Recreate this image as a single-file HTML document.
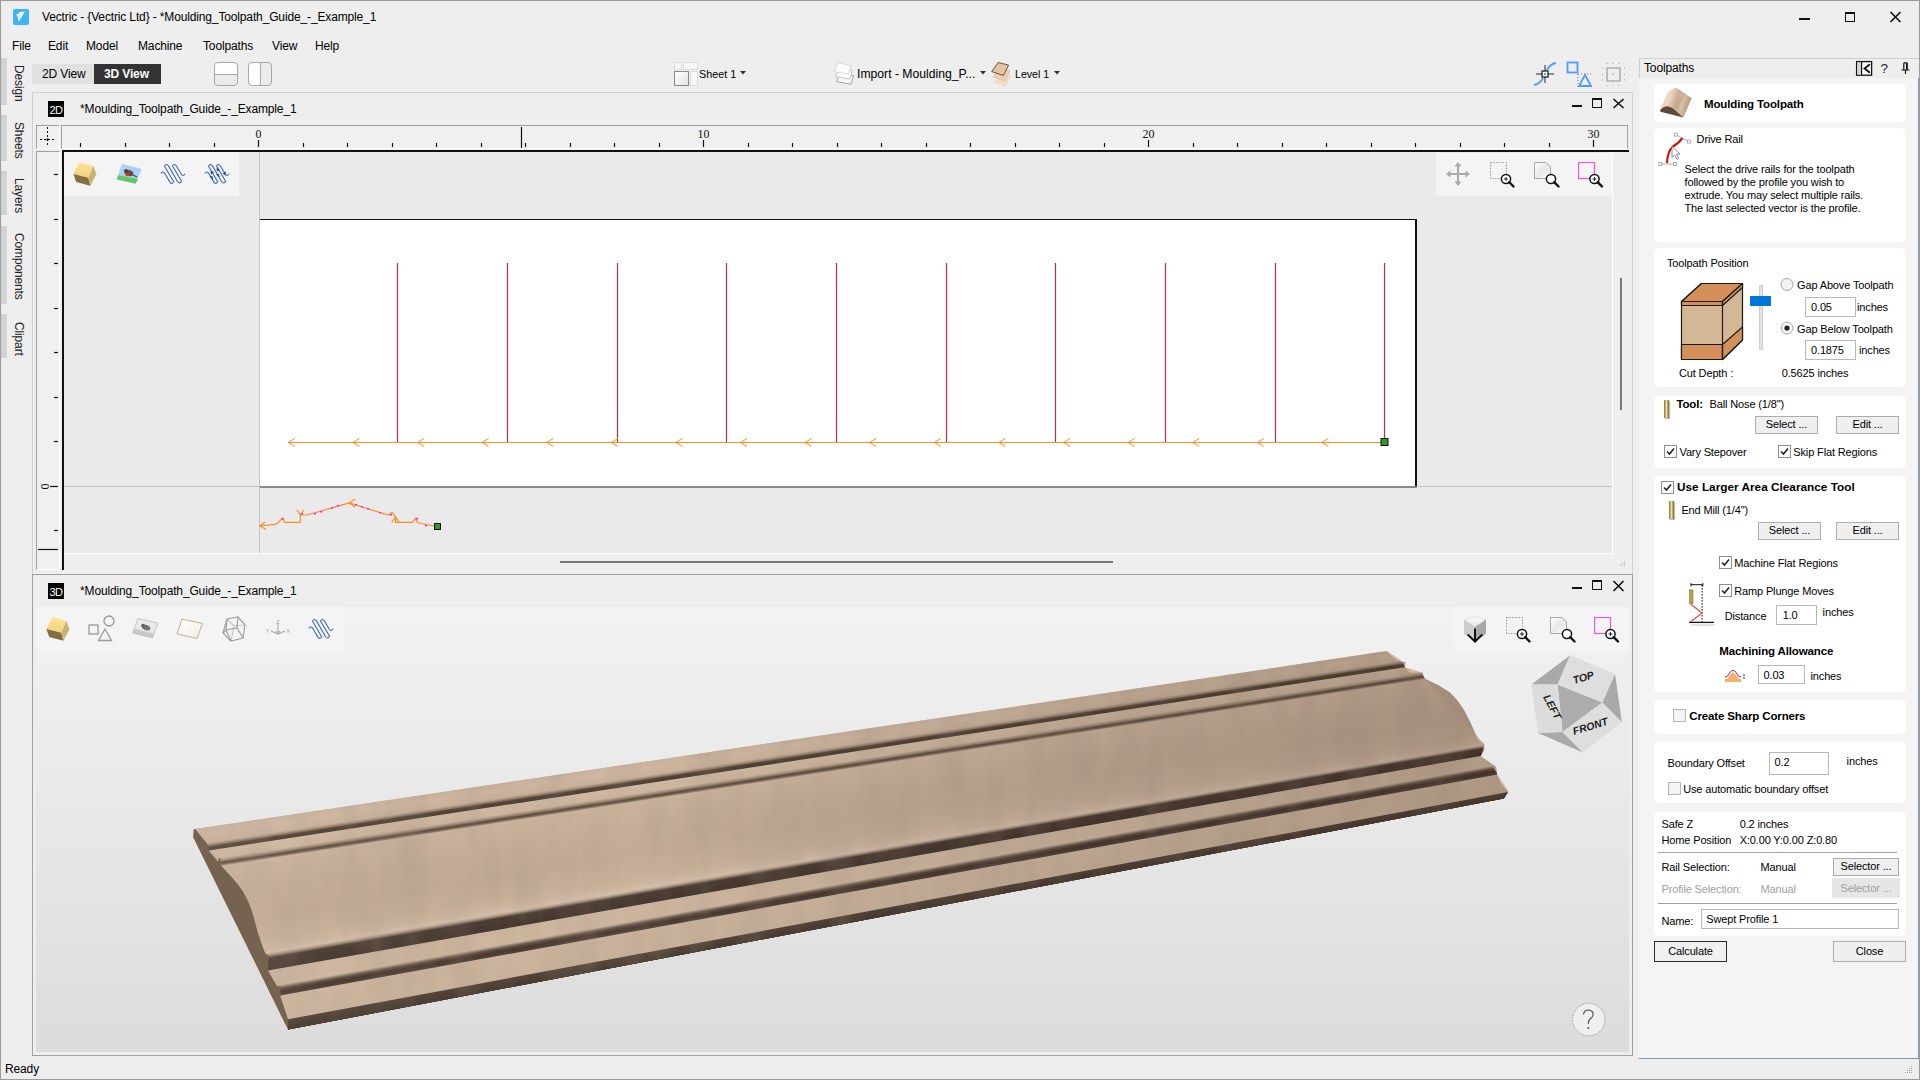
<!DOCTYPE html>
<html><head><meta charset="utf-8">
<style>
*{margin:0;padding:0;box-sizing:border-box}
html,body{width:1920px;height:1080px;overflow:hidden;background:#eeeeee;font-family:"Liberation Sans",sans-serif;font-size:12px;color:#000}
.a{position:absolute}
.t{position:absolute;white-space:pre;line-height:1;letter-spacing:-0.14px}
.b{font-weight:bold}
</style></head><body>
<!-- outer border -->
<div class="a" style="left:0;top:0;width:1920px;height:1080px;border:1px solid #9c9c9c"></div>

<!-- TITLE BAR -->
<div class="a" style="left:13px;top:9px;width:16px;height:16px;background:#3cb4f8;border-radius:2px"></div>
<svg class="a" style="left:13px;top:9px" width="16" height="16"><path d="M3 5.4 L5.6 4.9 L6.3 3.2 L9.5 2.7 L11.9 2.2 L6.5 11.8 L5.4 12.6 L5.6 11 L4.9 9.5 L4.6 7 Z" fill="#fff"/><path d="M6.2 5.5 L7 10" stroke="#8fd4fb" stroke-width="0.6"/></svg>
<div class="t" style="left:42px;top:11px">Vectric - {Vectric Ltd} - *Moulding_Toolpath_Guide_-_Example_1</div>
<div class="a" style="left:1799px;top:18px;width:11px;height:2px;background:#111"></div>
<div class="a" style="left:1845px;top:12px;width:10px;height:10px;border:1px solid #111;border-top-width:2px"></div>
<svg class="a" style="left:1889px;top:11px" width="13" height="12"><path d="M1.5 1 L11.5 11 M11.5 1 L1.5 11" stroke="#111" stroke-width="1.6"/></svg>

<!-- MENU -->
<div class="t" style="left:12px;top:40px">File</div>
<div class="t" style="left:48px;top:40px">Edit</div>
<div class="t" style="left:86px;top:40px">Model</div>
<div class="t" style="left:138px;top:40px">Machine</div>
<div class="t" style="left:203px;top:40px">Toolpaths</div>
<div class="t" style="left:272px;top:40px">View</div>
<div class="t" style="left:315px;top:40px">Help</div>

<!-- LEFT TABS -->
<div class="a" style="left:1px;top:58px;width:6px;height:47px;background:#d2d2d2"></div>
<div class="a" style="left:1px;top:115px;width:6px;height:46px;background:#d2d2d2"></div>
<div class="a" style="left:1px;top:171px;width:6px;height:44px;background:#d2d2d2"></div>
<div class="a" style="left:1px;top:226px;width:6px;height:78px;background:#d2d2d2"></div>
<div class="a" style="left:1px;top:314px;width:6px;height:44px;background:#d2d2d2"></div>
<div class="t" style="left:13px;top:65px;transform-origin:0 0;transform:translate(12px,0) rotate(90deg);color:#222">Design</div>
<div class="t" style="left:13px;top:122px;transform-origin:0 0;transform:translate(12px,0) rotate(90deg);color:#222">Sheets</div>
<div class="t" style="left:13px;top:178px;transform-origin:0 0;transform:translate(12px,0) rotate(90deg);color:#222">Layers</div>
<div class="t" style="left:13px;top:233px;transform-origin:0 0;transform:translate(12px,0) rotate(90deg);color:#222">Components</div>
<div class="t" style="left:13px;top:322px;transform-origin:0 0;transform:translate(12px,0) rotate(90deg);color:#222">Clipart</div>

<!-- VIEW TOOLBAR -->
<div class="a" style="left:32px;top:64px;width:62px;height:20px;background:#e1e1e1"></div>
<div class="t" style="left:42px;top:68px">2D View</div>
<div class="a" style="left:94px;top:64px;width:67px;height:20px;background:#333"></div>
<div class="t b" style="left:104px;top:68px;color:#fff">3D View</div>


<!-- layout icons -->
<div class="a" style="left:214px;top:62px;width:24px;height:24px;border:1px solid #a8a8a8;border-radius:4px;background:linear-gradient(#fff 0 11px,#a8a8a8 11px 12px,#ececec 12px)"></div>
<div class="a" style="left:248px;top:62px;width:24px;height:24px;border:1px solid #a8a8a8;border-radius:4px;background:linear-gradient(90deg,#fff 0 11px,#a8a8a8 11px 12px,#ececec 12px)"></div>

<!-- sheet/level -->
<div class="a" style="left:674px;top:62px;width:8px;height:8px;background:#f8f8f8;border:1px solid #dcdcdc"></div>
<div class="a" style="left:683px;top:62px;width:15px;height:8px;background:#f8f8f8;border:1px solid #dcdcdc"></div>
<div class="a" style="left:674px;top:71px;width:15px;height:15px;background:linear-gradient(135deg,#fff,#e4e4e4);border:1px solid #8a8a8a"></div>
<div class="a" style="left:690px;top:71px;width:8px;height:15px;background:#f8f8f8;border:1px solid #dcdcdc"></div>
<div class="t" style="left:699px;top:68.5px;font-size:10.8px;letter-spacing:0">Sheet 1</div>
<svg class="a" style="left:740px;top:71px" width="6" height="4"><path d="M0 0H6L3 3.5Z" fill="#333"/></svg>
<svg class="a" style="left:833px;top:61px" width="24" height="27"><g stroke-width="0.9" stroke-linejoin="round"><path d="M7.5 11.5 L20.5 14.8 L17.9 23.2 L3.6 20.6Z" fill="#fafafa" stroke="#9a9a9a"/><path d="M6.5 6.5 L19.5 9.8 L16.9 18.2 L2.6 15.6Z" fill="#fbfbfb" stroke="#c0c0c0"/><path d="M5 1.5 L18 4.8 L15.4 13.2 L1.1 10.6Z" fill="#fdfdfd" stroke="#d4d4d4"/></g></svg>
<div class="t" style="left:857px;top:68px;font-size:12.2px;letter-spacing:0">Import - Moulding_P...</div>
<svg class="a" style="left:980px;top:71px" width="6" height="4"><path d="M0 0H6L3 3.5Z" fill="#333"/></svg>
<svg class="a" style="left:991px;top:61px" width="24" height="27"><g stroke-width="0.9" stroke-linejoin="round"><path d="M3.2 21.6 L9.7 12.5 L20.1 15.1 L14.9 25.5Z" fill="#f2dcc6" stroke="#efdcc8"/><path d="M2.2 16.1 L8.7 7 L19.1 9.6 L13.9 20Z" fill="#e9cfb4" stroke="#dcc4aa"/><path d="M0.7 10.6 L7.2 1.5 L17.6 4.1 L12.4 14.5Z" fill="#e4c4a2" stroke="#5a4a3a"/></g></svg>
<div class="t" style="left:1015px;top:68.5px;font-size:10.6px;letter-spacing:0">Level 1</div>
<svg class="a" style="left:1054px;top:71px" width="6" height="4"><path d="M0 0H6L3 3.5Z" fill="#333"/></svg>

<!-- snap icons -->
<svg class="a" style="left:1533px;top:62px" width="24" height="24"><path d="M12 3V21M3 12H21" stroke="#8c8c8c" stroke-width="2"/><path d="M1 23 Q7 22 10 16 M14 8 Q17 2 23 1" stroke="#4e9cff" stroke-width="1.8" fill="none"/><rect x="9" y="9" width="6" height="6" fill="#fff" stroke="#111" stroke-width="1.2"/><rect x="11" y="11" width="2" height="2" fill="#4e9cff"/></svg>
<svg class="a" style="left:1566px;top:61px" width="26" height="26"><rect x="1.5" y="1.5" width="10" height="10" fill="none" stroke="#4e9cff" stroke-width="1.8"/><path d="M12 13H25M12 13V26" stroke="#777" stroke-width="1" stroke-dasharray="1 2"/><path d="M19 14 L25 25 H13Z" fill="none" stroke="#4e9cff" stroke-width="1.8"/></svg>
<svg class="a" style="left:1600px;top:61px" width="26" height="26"><g fill="#c8c8c8"><rect x="7" y="7" width="13" height="13" fill="none" stroke="#b0b0b0" stroke-width="1.6"/><path d="M6 2h2v1H6zM12 2h2v1h-2zM18 2h2v1h-2zM6 24h2v1H6zM12 24h2v1h-2zM18 24h2v1h-2zM2 6h1v2H2zM2 12h1v2H2zM2 18h1v2H2zM24 6h1v2h-1zM24 12h1v2h-1zM24 18h1v2h-1zM12 12h2v2h-2z"/></g></svg>

<!-- ============ 2D WINDOW ============ -->
<div class="a" style="left:32px;top:92px;width:1601px;height:483px;border:1px solid #d0d0d0;border-bottom-color:#a0a0a0;background:#eeeeee"></div>
<div class="a" style="left:48px;top:101px;width:16px;height:16px;background:#000"></div>
<div class="t" style="left:49.5px;top:104.5px;color:#fff;font-size:11px;letter-spacing:-0.6px">2D</div>
<div class="t" style="left:80px;top:103px">*Moulding_Toolpath_Guide_-_Example_1</div>
<div class="a" style="left:1572px;top:105px;width:10px;height:2px;background:#111"></div>
<div class="a" style="left:1592px;top:98px;width:10px;height:10px;border:1px solid #111;border-top-width:2px"></div>
<svg class="a" style="left:1612px;top:98px" width="13" height="11"><path d="M1.5 1 L11.5 10 M11.5 1 L1.5 10" stroke="#111" stroke-width="1.6"/></svg>

<!-- rulers -->
<div class="a" style="left:36px;top:125px;width:24px;height:24px;border:1px solid #a0a0a0;border-right-color:#fff;border-bottom-color:#fff;background:#f0f0f0"></div>
<svg class="a" style="left:36px;top:125px" width="24" height="24"><path d="M11.5 2V22M4 14.5H19" stroke="#111" stroke-width="1" stroke-dasharray="2 2"/><rect x="10.5" y="13.5" width="2" height="2" fill="#111"/></svg>
<div class="a" style="left:61px;top:125px;width:1567px;height:24px;border:1px solid #a0a0a0;border-bottom-color:#fff;background:#f0f0f0"></div>
<div class="a" style="left:36px;top:151px;width:24px;height:419px;border:1px solid #a0a0a0;border-right-color:#fff;border-bottom-color:#fff;background:#f0f0f0"></div>
<svg id="rulers" class="a" style="left:0;top:0" width="1640" height="580"><path d="M80.5 143V147" stroke="#111" stroke-width="1.2"/><path d="M125.5 143V147" stroke="#111" stroke-width="1.2"/><path d="M169.5 143V147" stroke="#111" stroke-width="1.2"/><path d="M214.5 143V147" stroke="#111" stroke-width="1.2"/><path d="M258.5 140V147" stroke="#111" stroke-width="1.2"/><text x="258.5" y="138" text-anchor="middle" font-family="Liberation Serif" font-size="12" fill="#111" transform="translate(0 0)">0</text><path d="M303.5 143V147" stroke="#111" stroke-width="1.2"/><path d="M347.5 143V147" stroke="#111" stroke-width="1.2"/><path d="M392.5 143V147" stroke="#111" stroke-width="1.2"/><path d="M436.5 143V147" stroke="#111" stroke-width="1.2"/><path d="M481.5 143V147" stroke="#111" stroke-width="1.2"/><path d="M525.5 143V147" stroke="#111" stroke-width="1.2"/><path d="M570.5 143V147" stroke="#111" stroke-width="1.2"/><path d="M614.5 143V147" stroke="#111" stroke-width="1.2"/><path d="M659.5 143V147" stroke="#111" stroke-width="1.2"/><path d="M703.5 140V147" stroke="#111" stroke-width="1.2"/><text x="703.5" y="138" text-anchor="middle" font-family="Liberation Serif" font-size="12" fill="#111" transform="translate(0 0)">10</text><path d="M748.5 143V147" stroke="#111" stroke-width="1.2"/><path d="M792.5 143V147" stroke="#111" stroke-width="1.2"/><path d="M837.5 143V147" stroke="#111" stroke-width="1.2"/><path d="M881.5 143V147" stroke="#111" stroke-width="1.2"/><path d="M926.5 143V147" stroke="#111" stroke-width="1.2"/><path d="M970.5 143V147" stroke="#111" stroke-width="1.2"/><path d="M1015.5 143V147" stroke="#111" stroke-width="1.2"/><path d="M1059.5 143V147" stroke="#111" stroke-width="1.2"/><path d="M1104.5 143V147" stroke="#111" stroke-width="1.2"/><path d="M1148.5 140V147" stroke="#111" stroke-width="1.2"/><text x="1148.5" y="138" text-anchor="middle" font-family="Liberation Serif" font-size="12" fill="#111" transform="translate(0 0)">20</text><path d="M1193.5 143V147" stroke="#111" stroke-width="1.2"/><path d="M1237.5 143V147" stroke="#111" stroke-width="1.2"/><path d="M1282.5 143V147" stroke="#111" stroke-width="1.2"/><path d="M1326.5 143V147" stroke="#111" stroke-width="1.2"/><path d="M1371.5 143V147" stroke="#111" stroke-width="1.2"/><path d="M1415.5 143V147" stroke="#111" stroke-width="1.2"/><path d="M1460.5 143V147" stroke="#111" stroke-width="1.2"/><path d="M1504.5 143V147" stroke="#111" stroke-width="1.2"/><path d="M1549.5 143V147" stroke="#111" stroke-width="1.2"/><path d="M1593.5 140V147" stroke="#111" stroke-width="1.2"/><text x="1593.5" y="138" text-anchor="middle" font-family="Liberation Serif" font-size="12" fill="#111" transform="translate(0 0)">30</text><path d="M521.5 127V148" stroke="#111" stroke-width="1.2"/><path d="M54 530.5H58" stroke="#111" stroke-width="1.2"/><path d="M50 486.5H58" stroke="#111" stroke-width="1.2"/><text x="0" y="0" text-anchor="middle" font-family="Liberation Serif" font-size="12" fill="#111" transform="translate(41 486.5) rotate(90)">0</text><path d="M54 441.5H58" stroke="#111" stroke-width="1.2"/><path d="M54 397.5H58" stroke="#111" stroke-width="1.2"/><path d="M54 352.5H58" stroke="#111" stroke-width="1.2"/><path d="M54 308.5H58" stroke="#111" stroke-width="1.2"/><path d="M54 263.5H58" stroke="#111" stroke-width="1.2"/><path d="M54 219.5H58" stroke="#111" stroke-width="1.2"/><path d="M54 174.5H58" stroke="#111" stroke-width="1.2"/><path d="M38 549.5H58" stroke="#111" stroke-width="1.2"/></svg>

<!-- drawing area -->
<div class="a" style="left:62px;top:150px;width:1551px;height:404px;background:#eaeaea;border-left:2px solid #111;border-top:2px solid #111"></div>
<div class="a" style="left:62px;top:553px;width:1551px;height:1px;background:#fff"></div>
<div class="a" style="left:62px;top:151px;width:2px;height:419px;background:#111"></div>
<div class="a" style="left:560px;top:561px;width:553px;height:2px;background:#787878"></div>
<div class="a" style="left:1612px;top:152px;width:1px;height:402px;background:#fff"></div><div class="a" style="left:1620px;top:278px;width:2px;height:132px;background:#787878"></div>
<svg class="a" style="left:1616px;top:560px" width="12" height="10"><g fill="#aaa"><rect x="8" y="1" width="1" height="1"/><rect x="6" y="3" width="1" height="1"/><rect x="8" y="3" width="1" height="1"/><rect x="4" y="5" width="1" height="1"/><rect x="6" y="5" width="1" height="1"/><rect x="8" y="5" width="1" height="1"/></g></svg>

<svg id="draw2d" class="a" style="left:0;top:0" width="1640" height="580"><rect x="62" y="150" width="1567" height="2" fill="#111"/><rect x="64" y="152" width="175" height="44" fill="#f4f4f4"/><rect x="1436" y="153" width="176" height="43" fill="#f4f4f4"/><path d="M259.5 152V553" stroke="#c4c4c4" stroke-width="1"/><path d="M64 486.5H260" stroke="#bdbdbd" stroke-width="1"/><rect x="260" y="219" width="1157" height="268" fill="#fff"/><path d="M260 219.5H1416.5V487" stroke="#111" stroke-width="1" fill="none"/><path d="M1416 219V488" stroke="#111" stroke-width="2"/><path d="M260 487H1417" stroke="#8a8a8a" stroke-width="2"/><path d="M1417 486.5H1612" stroke="#c4c4c4" stroke-width="1"/><path d="M397.5 263V442" stroke="#c0303c" stroke-width="1.2"/><path d="M507.5 263V442" stroke="#c0303c" stroke-width="1.2"/><path d="M617.5 263V442" stroke="#c0303c" stroke-width="1.2"/><path d="M726.5 263V442" stroke="#c0303c" stroke-width="1.2"/><path d="M836.5 263V442" stroke="#c0303c" stroke-width="1.2"/><path d="M946.5 263V442" stroke="#c0303c" stroke-width="1.2"/><path d="M1055.5 263V442" stroke="#c0303c" stroke-width="1.2"/><path d="M1165.5 263V442" stroke="#c0303c" stroke-width="1.2"/><path d="M1275.5 263V442" stroke="#c0303c" stroke-width="1.2"/><path d="M1384.5 263V442" stroke="#c0303c" stroke-width="1.2"/><path d="M288 442.5H1384" stroke="#ff8c1e" stroke-width="1.1"/><path d="M294.8 438.5 L288.3 442.5 L294.8 446.5" stroke="#ff8c1e" stroke-width="1" fill="none"/><path d="M359.4 438.5 L352.9 442.5 L359.4 446.5" stroke="#ff8c1e" stroke-width="1" fill="none"/><path d="M424.0 438.5 L417.5 442.5 L424.0 446.5" stroke="#ff8c1e" stroke-width="1" fill="none"/><path d="M488.6 438.5 L482.1 442.5 L488.6 446.5" stroke="#ff8c1e" stroke-width="1" fill="none"/><path d="M553.2 438.5 L546.7 442.5 L553.2 446.5" stroke="#ff8c1e" stroke-width="1" fill="none"/><path d="M617.8 438.5 L611.3 442.5 L617.8 446.5" stroke="#ff8c1e" stroke-width="1" fill="none"/><path d="M682.4 438.5 L675.9 442.5 L682.4 446.5" stroke="#ff8c1e" stroke-width="1" fill="none"/><path d="M747.0 438.5 L740.5 442.5 L747.0 446.5" stroke="#ff8c1e" stroke-width="1" fill="none"/><path d="M811.6 438.5 L805.1 442.5 L811.6 446.5" stroke="#ff8c1e" stroke-width="1" fill="none"/><path d="M876.2 438.5 L869.7 442.5 L876.2 446.5" stroke="#ff8c1e" stroke-width="1" fill="none"/><path d="M940.8 438.5 L934.3 442.5 L940.8 446.5" stroke="#ff8c1e" stroke-width="1" fill="none"/><path d="M1005.4 438.5 L998.9 442.5 L1005.4 446.5" stroke="#ff8c1e" stroke-width="1" fill="none"/><path d="M1070.0 438.5 L1063.5 442.5 L1070.0 446.5" stroke="#ff8c1e" stroke-width="1" fill="none"/><path d="M1134.6 438.5 L1128.1 442.5 L1134.6 446.5" stroke="#ff8c1e" stroke-width="1" fill="none"/><path d="M1199.2 438.5 L1192.7 442.5 L1199.2 446.5" stroke="#ff8c1e" stroke-width="1" fill="none"/><path d="M1263.8 438.5 L1257.3 442.5 L1263.8 446.5" stroke="#ff8c1e" stroke-width="1" fill="none"/><path d="M1328.4 438.5 L1321.9 442.5 L1328.4 446.5" stroke="#ff8c1e" stroke-width="1" fill="none"/><rect x="1381" y="438.5" width="7" height="7" fill="#2e9a2e" stroke="#111" stroke-width="1"/><path d="M259.7 526.0 L274.8 524.4 L278.4 522.8 L282.1 518.1 L284.7 522.3 L300.3 522.3 L300.3 515.0 L307.0 515.0 L349.3 503.0 L388.3 515.0 L392.0 512.4 L395.6 517.0 L395.6 522.3 L412.3 522.3 L416.0 518.0 L417.5 522.8 L434.2 526.0" stroke="#ff8c1e" stroke-width="1.2" fill="none"/><path d="M265 522 L260 526 L266 529.5" stroke="#ff8c1e" stroke-width="1.2" fill="none"/><path d="M355 499 L349.3 503 L355 507" stroke="#ff8c1e" stroke-width="1.2" fill="none"/><path d="M297 510 L300.3 515 L304 510" stroke="#ff8c1e" stroke-width="1.2" fill="none"/><path d="M391.5 522.5 L395.6 517 L399 522" stroke="#ff8c1e" stroke-width="1.2" fill="none"/><rect x="301" y="513" width="2" height="1.5" fill="#ff22ff"/><rect x="314" y="513" width="2" height="1.5" fill="#ff22ff"/><rect x="320" y="511" width="2" height="1.5" fill="#ff22ff"/><rect x="331" y="507" width="2" height="1.5" fill="#ff22ff"/><rect x="337" y="505" width="2" height="1.5" fill="#ff22ff"/><rect x="355" y="504" width="2" height="1.5" fill="#ff22ff"/><rect x="361" y="506" width="2" height="1.5" fill="#ff22ff"/><rect x="367" y="508" width="2" height="1.5" fill="#ff22ff"/><rect x="379" y="512" width="2" height="1.5" fill="#ff22ff"/><rect x="390" y="514" width="2" height="1.5" fill="#ff22ff"/><rect x="282" y="518" width="2" height="1.5" fill="#ff22ff"/><rect x="416" y="518" width="2" height="1.5" fill="#ff22ff"/><rect x="425" y="525" width="2" height="1.5" fill="#ff22ff"/><rect x="434.5" y="523.5" width="6" height="6" fill="#2e9a2e" stroke="#111" stroke-width="1"/></svg>


<!-- ============ 3D WINDOW ============ -->
<div class="a" style="left:32px;top:574px;width:1601px;height:482px;border:1px solid #a0a0a0;background:#eeeeee"></div>
<div class="a" style="left:36px;top:607px;width:1593px;height:445px;background:linear-gradient(#f2f2f2,#dcdcdc)"></div>
<div class="a" style="left:48px;top:583px;width:16px;height:16px;background:#000"></div>
<div class="t" style="left:49.5px;top:586.5px;color:#fff;font-size:11px;letter-spacing:-0.6px">3D</div>
<div class="t" style="left:80px;top:585px">*Moulding_Toolpath_Guide_-_Example_1</div>
<div class="a" style="left:1572px;top:587px;width:10px;height:2px;background:#111"></div>
<div class="a" style="left:1592px;top:580px;width:10px;height:10px;border:1px solid #111;border-top-width:2px"></div>
<svg class="a" style="left:1612px;top:580px" width="13" height="12"><path d="M1.5 1 L11.5 11 M11.5 1 L1.5 11" stroke="#111" stroke-width="1.6"/></svg>
<svg id="view3d" class="a" style="left:0;top:0" width="1640" height="1080"><defs>
<linearGradient id="wood" x1="0" y1="0" x2="1" y2="0"><stop offset="0" stop-color="#cdb29c"/><stop offset="0.5" stop-color="#c6ab95"/><stop offset="1" stop-color="#b39b85"/></linearGradient>
<linearGradient id="cove" x1="0" y1="0" x2="0.15" y2="1"><stop offset="0" stop-color="#b8a08a"/><stop offset="0.35" stop-color="#c8ae98"/><stop offset="0.7" stop-color="#cbb19b"/><stop offset="1" stop-color="#bba18b"/></linearGradient>
<linearGradient id="dark" x1="0" y1="0" x2="1" y2="0"><stop offset="0" stop-color="#4a3c32"/><stop offset="1" stop-color="#4e4036"/></linearGradient>
</defs><rect x="36" y="607" width="308" height="44" fill="#f4f4f4"/><rect x="1453" y="607" width="176" height="44" fill="#f4f4f4"/><defs><clipPath id="silclip"><polygon points="193.8,829.2 1386.7,651.1 1396.7,660.4 1405.6,661.9 1404.8,667.0 1410.0,672.6 1423.0,672.6 1423.7,677.4 1424.8,678.5 1438.9,685.6 1450.0,692.6 1457.4,700.4 1464.0,710.0 1470.4,722.6 1477.8,739.3 1484.3,744.8 1484.3,750.4 1480.6,755.9 1496.3,767.0 1497.2,774.4 1501.0,783.7 1508.3,792.0 1503.7,798.5 288.0,1029.5 193.2,837.3"/></clipPath><filter id="grain" x="0" y="0" width="1" height="1"><feTurbulence type="fractalNoise" baseFrequency="0.035 0.01" numOctaves="4" seed="11"/><feColorMatrix type="matrix" values="0 0 0 0 0.35  0 0 0 0 0.28  0 0 0 0 0.22  0 0 0 -1.6 0.95"/></filter></defs><polygon points="193.8,829.2 1386.7,651.1 1396.7,660.4 1405.6,661.9 1404.8,667.0 1410.0,672.6 1423.0,672.6 1423.7,677.4 1424.8,678.5 1438.9,685.6 1450.0,692.6 1457.4,700.4 1464.0,710.0 1470.4,722.6 1477.8,739.3 1484.3,744.8 1484.3,750.4 1480.6,755.9 1496.3,767.0 1497.2,774.4 1501.0,783.7 1508.3,792.0 1503.7,798.5 288.0,1029.5 193.2,837.3" fill="#caB19b"/><polygon points="195.0,829.0 1386.7,651.1 1401.0,661.0 206.5,843.0" fill="#ccb49e"/><polygon points="196.2,830.4 1388.1,652.1 1401.0,661.0 206.5,843.0" fill="#cdb59f"/><polygon points="197.3,831.8 1389.6,653.1 1401.0,661.0 206.5,843.0" fill="#ceb6a0"/><polygon points="198.4,833.2 1391.0,654.1 1401.0,661.0 206.5,843.0" fill="#cfb7a1"/><polygon points="199.6,834.6 1392.4,655.1 1401.0,661.0 206.5,843.0" fill="#d0b8a2"/><polygon points="200.8,836.0 1393.8,656.0 1401.0,661.0 206.5,843.0" fill="#cfb7a1"/><polygon points="201.9,837.4 1395.3,657.0 1401.0,661.0 206.5,843.0" fill="#ceb6a0"/><polygon points="203.1,838.8 1396.7,658.0 1401.0,661.0 206.5,843.0" fill="#cdb59f"/><polygon points="204.2,840.2 1398.1,659.0 1401.0,661.0 206.5,843.0" fill="#ccb49e"/><polygon points="205.3,841.6 1399.6,660.0 1401.0,661.0 206.5,843.0" fill="#cbb39d"/><polygon points="206.5,843.0 1401.0,661.0 1404.8,667.2 209.0,850.5" fill="#c2aa94"/><polygon points="206.7,843.5 1401.2,661.4 1404.8,667.2 209.0,850.5" fill="#b9a28d"/><polygon points="206.8,843.9 1401.5,661.7 1404.8,667.2 209.0,850.5" fill="#b19a85"/><polygon points="206.9,844.4 1401.7,662.1 1404.8,667.2 209.0,850.5" fill="#a9927d"/><polygon points="207.1,844.8 1401.9,662.5 1404.8,667.2 209.0,850.5" fill="#a08a76"/><polygon points="207.2,845.2 1402.1,662.9 1404.8,667.2 209.0,850.5" fill="#95806c"/><polygon points="207.4,845.6 1402.3,663.2 1404.8,667.2 209.0,850.5" fill="#867361"/><polygon points="207.5,846.0 1402.5,663.5 1404.8,667.2 209.0,850.5" fill="#786656"/><polygon points="207.6,846.4 1402.7,663.8 1404.8,667.2 209.0,850.5" fill="#6a594b"/><polygon points="207.8,846.8 1402.9,664.1 1404.8,667.2 209.0,850.5" fill="#5b4c40"/><polygon points="207.9,847.1 1403.1,664.4 1404.8,667.2 209.0,850.5" fill="#53453a"/><polygon points="208.1,847.8 1403.4,665.0 1404.8,667.2 209.0,850.5" fill="#524439"/><polygon points="208.3,848.5 1403.8,665.5 1404.8,667.2 209.0,850.5" fill="#514338"/><polygon points="208.6,849.1 1404.1,666.1 1404.8,667.2 209.0,850.5" fill="#504237"/><polygon points="208.8,849.8 1404.5,666.6 1404.8,667.2 209.0,850.5" fill="#4f4136"/><polygon points="209.0,850.5 1404.8,667.2 1421.0,672.8 218.3,858.5" fill="#d1b9a2"/><polygon points="210.9,852.1 1408.0,668.3 1421.0,672.8 218.3,858.5" fill="#d0b8a1"/><polygon points="212.7,853.7 1411.3,669.4 1421.0,672.8 218.3,858.5" fill="#d0b8a0"/><polygon points="214.6,855.3 1414.5,670.6 1421.0,672.8 218.3,858.5" fill="#cfb7a0"/><polygon points="216.4,856.9 1417.8,671.7 1421.0,672.8 218.3,858.5" fill="#ceb69f"/><polygon points="218.3,858.5 1421.0,672.8 1424.8,679.0 220.5,866.0" fill="#c4ac96"/><polygon points="218.4,859.0 1421.2,673.2 1424.8,679.0 220.5,866.0" fill="#bca58f"/><polygon points="218.6,859.4 1421.5,673.5 1424.8,679.0 220.5,866.0" fill="#b49d88"/><polygon points="218.7,859.9 1421.7,673.9 1424.8,679.0 220.5,866.0" fill="#ac9581"/><polygon points="218.8,860.3 1421.9,674.3 1424.8,679.0 220.5,866.0" fill="#a48e7a"/><polygon points="219.0,860.8 1422.1,674.7 1424.8,679.0 220.5,866.0" fill="#998470"/><polygon points="219.1,861.2 1422.4,675.0 1424.8,679.0 220.5,866.0" fill="#8b7765"/><polygon points="219.2,861.6 1422.6,675.4 1424.8,679.0 220.5,866.0" fill="#7d6a5a"/><polygon points="219.4,862.1 1422.8,675.8 1424.8,679.0 220.5,866.0" fill="#6f5d4f"/><polygon points="219.5,862.5 1423.1,676.1 1424.8,679.0 220.5,866.0" fill="#615044"/><polygon points="219.6,863.0 1423.3,676.5 1424.8,679.0 220.5,866.0" fill="#5e4e41"/><polygon points="219.7,863.4 1423.5,676.8 1424.8,679.0 220.5,866.0" fill="#675548"/><polygon points="219.8,863.8 1423.7,677.1 1424.8,679.0 220.5,866.0" fill="#705d4e"/><polygon points="219.9,864.1 1423.8,677.5 1424.8,679.0 220.5,866.0" fill="#786554"/><polygon points="220.1,864.5 1424.0,677.8 1424.8,679.0 220.5,866.0" fill="#816c5b"/><polygon points="220.2,864.9 1424.2,678.1 1424.8,679.0 220.5,866.0" fill="#8a7563"/><polygon points="220.2,865.1 1424.3,678.3 1424.8,679.0 220.5,866.0" fill="#947f6c"/><polygon points="220.3,865.3 1424.5,678.4 1424.8,679.0 220.5,866.0" fill="#9e8976"/><polygon points="220.4,865.5 1424.6,678.6 1424.8,679.0 220.5,866.0" fill="#a99380"/><polygon points="220.4,865.8 1424.7,678.8 1424.8,679.0 220.5,866.0" fill="#b39d89"/><polygon points="265.4,953.2 263.5,949.0 261.0,942.0 258.0,933.0 255.5,924.0 253.0,915.0 250.5,907.0 247.0,899.0 243.0,891.5 238.0,884.5 232.0,877.5 226.0,871.0 220.5,866.0 1424.8,679.0 1438.9,685.6 1450.0,692.6 1457.4,700.4 1464.0,710.0 1470.4,722.6 1477.8,739.3 1484.3,744.8" fill="#c0a892"/><polygon points="220.5,866.0 1424.8,679.0 1484.3,744.8 265.4,953.2" fill="#ccb49e"/><polygon points="221.6,868.1 1426.2,680.6 1484.3,744.8 265.4,953.2" fill="#cbb39d"/><polygon points="222.7,870.2 1427.7,682.2 1484.3,744.8 265.4,953.2" fill="#cab29c"/><polygon points="223.7,872.3 1429.1,683.7 1484.3,744.8 265.4,953.2" fill="#cab29c"/><polygon points="224.8,874.4 1430.5,685.3 1484.3,744.8 265.4,953.2" fill="#c9b19b"/><polygon points="225.9,876.5 1431.9,686.9 1484.3,744.8 265.4,953.2" fill="#c9b19b"/><polygon points="228.0,880.5 1434.7,689.9 1484.3,744.8 265.4,953.2" fill="#c8b09a"/><polygon points="230.0,884.5 1437.4,692.9 1484.3,744.8 265.4,953.2" fill="#c7af99"/><polygon points="232.1,888.5 1440.2,696.0 1484.3,744.8 265.4,953.2" fill="#c6ae98"/><polygon points="234.1,892.5 1442.9,699.0 1484.3,744.8 265.4,953.2" fill="#c5ad97"/><polygon points="236.2,896.5 1445.6,702.0 1484.3,744.8 265.4,953.2" fill="#c5ad97"/><polygon points="238.6,901.2 1448.8,705.6 1484.3,744.8 265.4,953.2" fill="#c4ac96"/><polygon points="241.1,905.9 1452.1,709.1 1484.3,744.8 265.4,953.2" fill="#c4ac96"/><polygon points="243.5,910.6 1455.3,712.7 1484.3,744.8 265.4,953.2" fill="#c4ac96"/><polygon points="245.9,915.4 1458.5,716.2 1484.3,744.8 265.4,953.2" fill="#c3ab95"/><polygon points="248.3,920.1 1461.7,719.8 1484.3,744.8 265.4,953.2" fill="#c4ac96"/><polygon points="250.4,924.1 1464.4,722.8 1484.3,744.8 265.4,953.2" fill="#c5ad97"/><polygon points="252.5,928.1 1467.2,725.8 1484.3,744.8 265.4,953.2" fill="#c6ae98"/><polygon points="254.5,932.1 1469.9,728.9 1484.3,744.8 265.4,953.2" fill="#c7af99"/><polygon points="256.6,936.1 1472.6,731.9 1484.3,744.8 265.4,953.2" fill="#c8b09a"/><polygon points="258.7,940.1 1475.4,734.9 1484.3,744.8 265.4,953.2" fill="#cab29c"/><polygon points="259.6,941.9 1476.6,736.2 1484.3,744.8 265.4,953.2" fill="#cbb39d"/><polygon points="260.5,943.6 1477.8,737.6 1484.3,744.8 265.4,953.2" fill="#ccb49e"/><polygon points="261.4,945.4 1478.9,738.9 1484.3,744.8 265.4,953.2" fill="#ceb6a0"/><polygon points="262.3,947.1 1480.1,740.2 1484.3,744.8 265.4,953.2" fill="#cfb7a1"/><polygon points="263.2,948.8 1481.3,741.5 1484.3,744.8 265.4,953.2" fill="#d1b9a3"/><polygon points="263.6,949.7 1481.9,742.2 1484.3,744.8 265.4,953.2" fill="#d2baa5"/><polygon points="264.1,950.6 1482.5,742.8 1484.3,744.8 265.4,953.2" fill="#d3bca7"/><polygon points="264.5,951.5 1483.1,743.5 1484.3,744.8 265.4,953.2" fill="#d4bea9"/><polygon points="265.0,952.3 1483.7,744.1 1484.3,744.8 265.4,953.2" fill="#d5bfab"/><polygon points="265.4,953.2 1484.3,744.8 1480.6,756.0 268.0,970.5" fill="#d3bfaa"/><polygon points="265.5,953.7 1484.2,745.1 1480.6,756.0 268.0,970.5" fill="#cab6a1"/><polygon points="265.6,954.2 1484.1,745.5 1480.6,756.0 268.0,970.5" fill="#c1ac97"/><polygon points="265.6,954.8 1484.0,745.8 1480.6,756.0 268.0,970.5" fill="#b8a28d"/><polygon points="265.7,955.3 1483.9,746.1 1480.6,756.0 268.0,970.5" fill="#af9984"/><polygon points="265.8,955.8 1483.7,746.5 1480.6,756.0 268.0,970.5" fill="#a18b78"/><polygon points="265.9,956.4 1483.6,746.9 1480.6,756.0 268.0,970.5" fill="#8e7a68"/><polygon points="266.0,957.0 1483.5,747.2 1480.6,756.0 268.0,970.5" fill="#7b695a"/><polygon points="266.1,957.6 1483.4,747.6 1480.6,756.0 268.0,970.5" fill="#68584a"/><polygon points="266.1,958.1 1483.2,748.0 1480.6,756.0 268.0,970.5" fill="#55473c"/><polygon points="266.2,958.7 1483.1,748.4 1480.6,756.0 268.0,970.5" fill="#4b3d34"/><polygon points="266.6,961.1 1482.6,749.9 1480.6,756.0 268.0,970.5" fill="#4a3c33"/><polygon points="266.9,963.4 1482.1,751.4 1480.6,756.0 268.0,970.5" fill="#493b32"/><polygon points="267.3,965.8 1481.6,753.0 1480.6,756.0 268.0,970.5" fill="#483a31"/><polygon points="267.6,968.1 1481.1,754.5 1480.6,756.0 268.0,970.5" fill="#473930"/><polygon points="268.0,970.5 1480.6,756.0 1492.0,766.0 277.5,985.5" fill="#ceb69f"/><polygon points="269.9,973.5 1482.9,758.0 1492.0,766.0 277.5,985.5" fill="#cfb7a0"/><polygon points="271.8,976.5 1485.2,760.0 1492.0,766.0 277.5,985.5" fill="#cfb7a0"/><polygon points="273.7,979.5 1487.4,762.0 1492.0,766.0 277.5,985.5" fill="#cfb7a0"/><polygon points="275.6,982.5 1489.7,764.0 1492.0,766.0 277.5,985.5" fill="#d0b8a1"/><polygon points="277.5,985.5 1492.0,766.0 1497.2,774.6 280.3,995.5" fill="#c2ad96"/><polygon points="277.7,986.1 1492.3,766.5 1497.2,774.6 280.3,995.5" fill="#af9a85"/><polygon points="277.8,986.7 1492.6,767.0 1497.2,774.6 280.3,995.5" fill="#9b8774"/><polygon points="278.0,987.3 1492.9,767.5 1497.2,774.6 280.3,995.5" fill="#877462"/><polygon points="278.2,987.9 1493.2,768.1 1497.2,774.6 280.3,995.5" fill="#746151"/><polygon points="278.3,988.5 1493.6,768.6 1497.2,774.6 280.3,995.5" fill="#665546"/><polygon points="278.5,989.1 1493.9,769.1 1497.2,774.6 280.3,995.5" fill="#5f4e41"/><polygon points="278.7,989.7 1494.2,769.6 1497.2,774.6 280.3,995.5" fill="#58483c"/><polygon points="278.8,990.3 1494.5,770.1 1497.2,774.6 280.3,995.5" fill="#514237"/><polygon points="279.0,990.9 1494.8,770.6 1497.2,774.6 280.3,995.5" fill="#4a3b32"/><polygon points="279.2,991.5 1495.1,771.2 1497.2,774.6 280.3,995.5" fill="#473931"/><polygon points="279.4,992.3 1495.5,771.8 1497.2,774.6 280.3,995.5" fill="#4a3c33"/><polygon points="279.6,993.1 1496.0,772.5 1497.2,774.6 280.3,995.5" fill="#4d3e35"/><polygon points="279.9,993.9 1496.4,773.2 1497.2,774.6 280.3,995.5" fill="#504037"/><polygon points="280.1,994.7 1496.8,773.9 1497.2,774.6 280.3,995.5" fill="#534339"/><polygon points="280.3,995.5 1497.2,774.6 1508.3,792.0 288.0,1019.3" fill="#ceb69f"/><polygon points="281.8,1000.3 1499.4,778.1 1508.3,792.0 288.0,1019.3" fill="#cdb59e"/><polygon points="283.4,1005.0 1501.6,781.6 1508.3,792.0 288.0,1019.3" fill="#cdb59e"/><polygon points="284.9,1009.8 1503.9,785.0 1508.3,792.0 288.0,1019.3" fill="#cdb59e"/><polygon points="286.5,1014.5 1506.1,788.5 1508.3,792.0 288.0,1019.3" fill="#ccb49d"/><polygon points="288.0,1019.3 1508.3,792.0 1503.7,798.5 288.0,1029.5" fill="#534339"/><polygon points="288.0,1021.3 1507.4,793.3 1503.7,798.5 288.0,1029.5" fill="#514238"/><polygon points="288.0,1023.4 1506.5,794.6 1503.7,798.5 288.0,1029.5" fill="#4f4036"/><polygon points="288.0,1025.4 1505.5,795.9 1503.7,798.5 288.0,1029.5" fill="#4d3e34"/><polygon points="288.0,1027.5 1504.6,797.2 1503.7,798.5 288.0,1029.5" fill="#4b3d33"/><linearGradient id="tone" gradientUnits="userSpaceOnUse" x1="190" y1="0" x2="1510" y2="0"><stop offset="0" stop-color="#fff0e0" stop-opacity="0.06"/><stop offset="0.32" stop-color="#000" stop-opacity="0"/><stop offset="1" stop-color="#2a1a10" stop-opacity="0.19"/></linearGradient><g clip-path="url(#silclip)"><rect x="190" y="645" width="1325" height="390" filter="url(#grain)" opacity="0.28"/><polygon points="193.8,829.2 1386.7,651.1 1396.7,660.4 1405.6,661.9 1404.8,667.0 1410.0,672.6 1423.0,672.6 1423.7,677.4 1424.8,678.5 1438.9,685.6 1450.0,692.6 1457.4,700.4 1464.0,710.0 1470.4,722.6 1477.8,739.3 1484.3,744.8 1484.3,750.4 1480.6,755.9 1496.3,767.0 1497.2,774.4 1501.0,783.7 1508.3,792.0 1503.7,798.5 288.0,1029.5 193.2,837.3" fill="url(#tone)"/></g><polygon points="193.8,829.2 195.2,828.9 206.3,842.8 208.1,845.6 209.0,850.2 208.6,850.6 218.0,861.5 219.0,857.8 220.3,858.8 220.5,865.0 226.0,871.0 232.0,877.5 238.0,884.5 243.0,891.5 247.0,899.0 250.5,907.0 253.0,915.0 255.5,924.0 258.0,933.0 261.0,942.0 263.5,949.0 265.4,953.2 268.6,955.8 268.6,957.0 268.0,970.0 268.0,970.7 277.0,986.2 279.7,986.5 280.3,990.8 280.3,996.0 288.0,1019.3 288.0,1029.5 193.2,837.3" fill="#76634f"/><polygon points="1531.3,684.4 1570.2,655.2 1557.6,684.4" fill="#a9a9a9"/><polygon points="1615.0,673.7 1621.8,722.3 1602.3,702.5" fill="#a9a9a9"/><polygon points="1538.1,733.0 1562.5,732.0 1582.9,752.5" fill="#a9a9a9"/><polygon points="1557.6,684.4 1602.3,702.5 1562.5,732.0" fill="#acacac"/><polygon points="1570.2,655.2 1615.0,673.7 1602.3,702.5 1557.6,684.4" fill="#dedede"/><polygon points="1531.3,684.4 1557.6,684.4 1562.5,732.0 1538.1,733.0" fill="#dcdcdc"/><polygon points="1562.5,732.0 1602.3,702.5 1621.8,722.3 1582.9,752.5" fill="#dedede"/><text x="0" y="0" font-family="Liberation Sans" font-weight="bold" font-style="italic" font-size="10.5" fill="#222" transform="translate(1574 684) rotate(-16)">TOP</text><text x="0" y="0" font-family="Liberation Sans" font-weight="bold" font-style="italic" font-size="10.5" fill="#222" transform="translate(1543 697) rotate(62)">LEFT</text><text x="0" y="0" font-family="Liberation Sans" font-weight="bold" font-style="italic" font-size="10.5" fill="#222" transform="translate(1574 735) rotate(-17)">FRONT</text><circle cx="1588.8" cy="1019.6" r="16.2" fill="#efefef" stroke="#9a9a9a" stroke-width="0.8" stroke-dasharray="2 1"/><path d="M1583.5 1014.5 Q1584 1010 1588.5 1010 Q1593.5 1010.5 1593 1015 Q1592.5 1017.5 1590 1019 Q1588.3 1020.5 1588.3 1024" stroke="#555" stroke-width="1.2" fill="none"/><circle cx="1588.3" cy="1028" r="1" fill="#555"/></svg>

<!--icons--><svg class="a" style="left:73px;top:162px" width="24" height="24" viewBox="0 0 24 24"><defs><linearGradient id="ctop" x1="0" y1="0" x2="0" y2="1"><stop offset="0" stop-color="#ffe596"/><stop offset="1" stop-color="#f2d27e"/></linearGradient></defs>
<polygon points="0.4,11.9 6.2,0 20.4,4.1 15.4,15.8" fill="url(#ctop)"/>
<polygon points="0.4,11.9 15.4,15.8 17.3,23.8 3.2,19.9" fill="#82703e"/>
<polygon points="15.4,15.8 20.4,4.1 23.4,12.2 17.3,23.8" fill="#cbb36f"/></svg>
<svg class="a" style="left:116px;top:163px" width="26" height="22" viewBox="0 0 26 22"><polygon points="6,1 25.5,6 19.5,20.5 0.8,16.3" fill="#a6d2fa" stroke="#c8d8e8" stroke-width="0.6"/><polygon points="2.4,12.3 22,16 19.5,20.5 0.8,16.3" fill="#5cc85c"/><ellipse cx="13" cy="10" rx="4.5" ry="3" fill="#6a4a3a" transform="rotate(20 13 10)"/><circle cx="10" cy="8" r="2" fill="#5a3a2a"/><ellipse cx="11.5" cy="11.5" rx="2.2" ry="1.8" fill="#e03030"/><path d="M17 12 L21 14" stroke="#5a3a2a" stroke-width="1.2"/></svg>
<svg class="a" style="left:160px;top:163px" width="26" height="22" viewBox="0 0 26 22"><path d="M0.8 10.4 Q3 7.5 5 10.8 L10.2 19.6 Q11.8 21.8 13.7 18.8 L4.5 3.3 Q6.4 0 8.5 2.9 L17.3 18.3 Q19.7 21.8 21.6 18.3 L12.5 3.1 Q14.3 0 16.4 3.1 L21.4 11.3 Q23 13.8 25.2 10.8" stroke="#3c64b4" stroke-width="1.05" fill="none"/></svg>
<svg class="a" style="left:204px;top:163px" width="26" height="22" viewBox="0 0 26 22"><path d="M0.8 10.4 Q3 7.5 5 10.8 L10.2 19.6 Q11.8 21.8 13.7 18.8 L4.5 3.3 Q6.4 0 8.5 2.9 L17.3 18.3 Q19.7 21.8 21.6 18.3 L12.5 3.1 Q14.3 0 16.4 3.1 L21.4 11.3 Q23 13.8 25.2 10.8" stroke="#3c64b4" stroke-width="1.05" fill="none"/><g fill="#2a4a9a"><path d="M6.5 7.5 L10 9.5 L7 11.5Z"/><path d="M9 17 L5.5 13.5 L8.5 13Z"/><path d="M12.5 4.5 L16 7 L13 8.5Z"/><path d="M15.5 14.5 L12 11.5 L15 11Z"/><path d="M22 8.5 L21.5 12.5 L18.5 10.5Z"/></g></svg>
<svg class="a" style="left:1446px;top:162px" width="24" height="24" viewBox="0 0 24 24"><g fill="#aaa" stroke="#aaa"><path d="M12 2V22M2 12H22" stroke-width="2"/><path d="M12 0 L8.5 4.5 H15.5Z M12 24 L8.5 19.5 H15.5Z M0 12 L4.5 8.5 V15.5Z M24 12 L19.5 8.5 V15.5Z" stroke="none"/></g></svg>
<svg class="a" style="left:1490px;top:162px" width="26" height="26" viewBox="0 0 26 26"><rect x="0.5" y="0.5" width="16" height="16" fill="none" stroke="#9a9a9a" stroke-width="1" stroke-dasharray="1.5 1.5"/><circle cx="16" cy="17" r="4.6" fill="#fff" stroke="#111" stroke-width="1.5"/><path d="M19.2 20.2 L23.5 24.5" stroke="#111" stroke-width="2.4" stroke-linecap="round"/><path d="M14 17H18M16 15V19" stroke="#111" stroke-width="0.9"/></svg>
<svg class="a" style="left:1534px;top:162px" width="26" height="26" viewBox="0 0 26 26"><defs><linearGradient id="pg" x1="0" y1="0" x2="1" y2="1"><stop offset="0" stop-color="#fff"/><stop offset="0.5" stop-color="#e8e8e8"/><stop offset="1" stop-color="#fff"/></linearGradient></defs><path d="M0.5 0.5 H12 L16.5 5 V16.5 H0.5Z" fill="url(#pg)" stroke="#a8a8a8" stroke-width="1"/><circle cx="17" cy="17" r="4.6" fill="#fff" stroke="#111" stroke-width="1.5"/><path d="M20.2 20.2 L24.5 24.5" stroke="#111" stroke-width="2.4" stroke-linecap="round"/></svg>
<svg class="a" style="left:1578px;top:162px" width="26" height="26" viewBox="0 0 26 26"><rect x="0.5" y="0.5" width="16" height="16" fill="none" stroke="#f050f0" stroke-width="1.2"/><circle cx="16.5" cy="17" r="4.6" fill="#fff" stroke="#111" stroke-width="1.5"/><path d="M19.7 20.2 L24.0 24.5" stroke="#111" stroke-width="2.4" stroke-linecap="round"/><path d="M14.5 17H18.5M16.5 15V19" stroke="#111" stroke-width="0.9"/></svg>
<svg class="a" style="left:46px;top:617px" width="24" height="24" viewBox="0 0 24 24"><defs><linearGradient id="ctop" x1="0" y1="0" x2="0" y2="1"><stop offset="0" stop-color="#ffe596"/><stop offset="1" stop-color="#f2d27e"/></linearGradient></defs>
<polygon points="0.4,11.9 6.2,0 20.4,4.1 15.4,15.8" fill="url(#ctop)"/>
<polygon points="0.4,11.9 15.4,15.8 17.3,23.8 3.2,19.9" fill="#82703e"/>
<polygon points="15.4,15.8 20.4,4.1 23.4,12.2 17.3,23.8" fill="#cbb36f"/></svg>
<svg class="a" style="left:88px;top:615px" width="28" height="27" viewBox="0 0 28 27"><rect x="1" y="10" width="9" height="9" fill="none" stroke="#999" stroke-width="1.3"/><circle cx="21" cy="6" r="5" fill="none" stroke="#999" stroke-width="1.3"/><path d="M17 14 L23.5 25.5 H10.5Z" fill="none" stroke="#999" stroke-width="1.3"/></svg>
<svg class="a" style="left:132px;top:618px" width="27" height="21" viewBox="0 0 27 21"><polygon points="6,0.5 26,5 20.5,20 0.5,15" fill="#e8e8e8" stroke="#bdbdbd" stroke-width="0.8"/><polygon points="2.5,11 22,15.5 20.5,20 0.5,15" fill="#c8c8c8"/><ellipse cx="14" cy="9.5" rx="4.5" ry="2.6" fill="#707070" transform="rotate(22 14 9.5)"/><circle cx="11" cy="7.5" r="1.8" fill="#606060"/></svg>
<svg class="a" style="left:176px;top:618px" width="28" height="22" viewBox="0 0 28 22"><defs><linearGradient id="sh" x1="0" y1="0" x2="1" y2="1"><stop offset="0" stop-color="#fff"/><stop offset="1" stop-color="#f0ece4"/></linearGradient></defs><polygon points="6,1 26.5,5.5 21,20.5 1,16" fill="url(#sh)" stroke="#c2b08e" stroke-width="1"/></svg>
<svg class="a" style="left:221px;top:616px" width="26" height="26" viewBox="0 0 26 26"><g fill="none" stroke="#a0a0a0" stroke-width="1.2"><path d="M6 3 L17 1 L24 9 L22 22 L10 25 L2 17 Z"/><path d="M6 3 L5 14 L10 25 M5 14 L16 12 L22 22 M16 12 L17 1 M2 17 L5 14"/><path d="M6 3 L13 10 L24 9 M13 10 L10 25" opacity="0.5"/></g></svg>
<svg class="a" style="left:265px;top:619px" width="26" height="20" viewBox="0 0 26 20"><g stroke="#a8a8a8" fill="none" stroke-width="1.1"><path d="M13 4 V15 M13 15 L6 12 M13 15 L20 12"/><path d="M13 15 L11 12 M13 15 L15 12"/></g><text x="11" y="5" font-family="Liberation Sans" font-size="6" fill="#a8a8a8">Z</text><text x="0.5" y="14" font-family="Liberation Sans" font-size="6" fill="#a8a8a8">Y</text><text x="21" y="14" font-family="Liberation Sans" font-size="6" fill="#a8a8a8">X</text></svg>
<svg class="a" style="left:308px;top:618px" width="28" height="22" viewBox="0 0 28 22"><path d="M0.8 10.4 Q3 7.5 5 10.8 L10.2 19.6 Q11.8 21.8 13.7 18.8 L4.5 3.3 Q6.4 0 8.5 2.9 L17.3 18.3 Q19.7 21.8 21.6 18.3 L12.5 3.1 Q14.3 0 16.4 3.1 L21.4 11.3 Q23 13.8 25.2 10.8" stroke="#3c64b4" stroke-width="1.05" fill="none"/></svg>
<svg class="a" style="left:1463px;top:616px" width="24" height="27" viewBox="0 0 24 27"><defs><linearGradient id="cd" x1="0" y1="0" x2="0" y2="1"><stop offset="0" stop-color="#fff"/><stop offset="1" stop-color="#e4e4e4"/></linearGradient></defs><polygon points="1,3.8 12,0.8 23,3.8 12,11" fill="url(#cd)" stroke="#c8c8c8" stroke-width="0.5"/><polygon points="1,3.8 12,11 12,25.7 1,18" fill="#cdcdcd"/><polygon points="23,3.8 12,11 12,25.7 23,18" fill="#a8a8a8"/><path d="M12 12.5 V25 M4.6 18.4 L12 25.5 L19.4 18.4" stroke="#111" stroke-width="2" fill="none"/></svg>
<svg class="a" style="left:1506px;top:617px" width="26" height="26" viewBox="0 0 26 26"><rect x="0.5" y="0.5" width="16" height="16" fill="none" stroke="#9a9a9a" stroke-width="1" stroke-dasharray="1.5 1.5"/><circle cx="16" cy="17" r="4.6" fill="#fff" stroke="#111" stroke-width="1.5"/><path d="M19.2 20.2 L23.5 24.5" stroke="#111" stroke-width="2.4" stroke-linecap="round"/><path d="M14 17H18M16 15V19" stroke="#111" stroke-width="0.9"/></svg>
<svg class="a" style="left:1550px;top:617px" width="26" height="26" viewBox="0 0 26 26"><defs><linearGradient id="pg" x1="0" y1="0" x2="1" y2="1"><stop offset="0" stop-color="#fff"/><stop offset="0.5" stop-color="#e8e8e8"/><stop offset="1" stop-color="#fff"/></linearGradient></defs><path d="M0.5 0.5 H12 L16.5 5 V16.5 H0.5Z" fill="url(#pg)" stroke="#a8a8a8" stroke-width="1"/><circle cx="17" cy="17" r="4.6" fill="#fff" stroke="#111" stroke-width="1.5"/><path d="M20.2 20.2 L24.5 24.5" stroke="#111" stroke-width="2.4" stroke-linecap="round"/></svg>
<svg class="a" style="left:1594px;top:617px" width="26" height="26" viewBox="0 0 26 26"><rect x="0.5" y="0.5" width="16" height="16" fill="none" stroke="#f050f0" stroke-width="1.2"/><circle cx="16.5" cy="17" r="4.6" fill="#fff" stroke="#111" stroke-width="1.5"/><path d="M19.7 20.2 L24.0 24.5" stroke="#111" stroke-width="2.4" stroke-linecap="round"/><path d="M14.5 17H18.5M16.5 15V19" stroke="#111" stroke-width="0.9"/></svg><!--/icons-->
<!-- ============ RIGHT PANEL ============ -->
<div class="a" style="left:1639px;top:59px;width:279px;height:1000px;background:#f4f4f4"></div>
<div class="a" style="left:1639px;top:58px;width:280px;height:20px;background:#eeeeee;border:1px solid #cfcfcf;border-bottom:none;border-right:none"></div>
<div class="a" style="left:1918px;top:78px;width:1px;height:981px;background:#7b97bd"></div><div class="a" style="left:1919px;top:0;width:1px;height:1080px;background:#9c9c9c"></div>
<div class="a" style="left:1639px;top:1058px;width:280px;height:1px;background:#7b97bd"></div>
<div class="t" style="left:1644px;top:62px">Toolpaths</div>
<div id="panel"><div class="a" style="left:1654px;top:84px;width:252px;height:38px;background:#fff;border-radius:5px"></div>
<div class="t b" style="left:1704px;top:98.87px;font-size:11.5px">Moulding Toolpath</div>
<svg class="a" style="left:1659px;top:86px" width="36" height="34"><defs><linearGradient id="mic" x1="0" y1="0" x2="1" y2="0.3"><stop offset="0" stop-color="#d8bca0"/><stop offset="0.35" stop-color="#f0d8c0"/><stop offset="0.6" stop-color="#c8aa90"/><stop offset="0.8" stop-color="#d8bea4"/><stop offset="1" stop-color="#b89a80"/></linearGradient></defs><path d="M1.2 24 L8.9 6.3 Q13 2 17.7 1.9 L25.6 7.3 L32.7 12.3 L24.3 31.5 L16 24 Q12 20 8.9 20.25 Z" fill="url(#mic)"/><path d="M1.2 24 Q5 20 8.9 20.25 Q13 21 16 24 L24.3 31.5 L14.3 29 L1.4 25.7Z" fill="#5e4a3a"/><path d="M25.6 7.3 L17 23" stroke="#a08870" stroke-width="0.8" stroke-dasharray="1 1"/></svg>
<div class="a" style="left:1654px;top:128px;width:252px;height:114px;background:#fff;border-radius:5px"></div>
<div class="t" style="left:1696.6px;top:134.29px;font-size:11px">Drive Rail</div>
<div class="t" style="left:1684.5px;top:163.79px;font-size:11px">Select the drive rails for the toolpath</div>
<div class="t" style="left:1684.5px;top:176.79px;font-size:11px">followed by the profile you wish to</div>
<div class="t" style="left:1684.5px;top:189.79px;font-size:11px">extrude. You may select multiple rails.</div>
<div class="t" style="left:1684.5px;top:202.79px;font-size:11px">The last selected vector is the profile.</div>
<svg class="a" style="left:1657px;top:132px" width="36" height="36"><path d="M18.7 2.6 L31.9 9.6 M3.4 32 H18" stroke="#a8a8a8" stroke-width="1"/><path d="M10 31 Q10.5 19 16 14.5 Q22.5 10.5 25.3 6.2" stroke="#d01010" stroke-width="2.2" fill="none"/><rect x="17.2" y="1.1" width="3" height="3" fill="#fff" stroke="#999" stroke-width="0.8"/><rect x="30.4" y="8.1" width="3" height="3" fill="#fff" stroke="#999" stroke-width="0.8"/><rect x="1.9" y="30.5" width="3" height="3" fill="#fff" stroke="#999" stroke-width="0.8"/><rect x="16.5" y="30.5" width="3" height="3" fill="#fff" stroke="#999" stroke-width="0.8"/><path d="M15 14.5 L15 25.5 L17.5 23 L20 27.5 L21.5 26.5 L19.5 22 L23 22 Z" fill="#fff" stroke="#777" stroke-width="0.8"/></svg>
<div class="a" style="left:1654px;top:248px;width:252px;height:139px;background:#fff;border-radius:5px"></div>
<div class="t" style="left:1667px;top:257.99px;font-size:11px">Toolpath Position</div>
<svg class="a" style="left:1678px;top:280px" width="70" height="84"><g stroke="#1a1a1a" stroke-width="1.2" stroke-linejoin="round">
<path d="M3.5 21.5 L23.5 3.5 L64.5 3.5 L64.5 60 L44.5 79.5 L3.5 79.5 Z" fill="#d4b896"/>
<path d="M3.5 21.5 L23.5 3.5 L64.5 3.5 L44.5 21.5 Z" fill="#d49058"/>
<path d="M3.5 21.5 H44.5 V25.5 H3.5Z" fill="#d49058"/>
<path d="M44.5 21.5 L64.5 3.5 L64.5 7.5 L44.5 25.5Z" fill="#d49058"/>
<path d="M3.5 64.5 H44.5 V79.5 H3.5Z" fill="#d49058"/>
<path d="M44.5 64.5 L64.5 47 L64.5 60 L44.5 79.5Z" fill="#d49058"/>
<path d="M44.5 21.5 V79.5" fill="none"/>
</g></svg>
<div class="a" style="left:1759px;top:285px;width:4px;height:65px;background:#e2e2e2;border:1px solid #cfcfcf"></div>
<div class="a" style="left:1750px;top:296px;width:21px;height:10px;background:#0078d7"></div>
<svg class="a" style="left:1780px;top:277px" width="15" height="60"><circle cx="7" cy="7.5" r="6" fill="#f4f4f4" stroke="#a8a8a8"/><circle cx="7" cy="51" r="6" fill="#f4f4f4" stroke="#a8a8a8"/><circle cx="7" cy="51" r="2.6" fill="#222"/></svg>
<div class="t" style="left:1797px;top:279.99px;font-size:11px">Gap Above Toolpath</div>
<div class="a" style="left:1805px;top:297px;width:51px;height:20px;background:#fff;border:1px solid #b8b8b8"></div>
<div class="t" style="left:1811px;top:301.79px;font-size:11px">0.05</div>
<div class="t" style="left:1857px;top:301.79px;font-size:11px">inches</div>
<div class="t" style="left:1797px;top:324.09px;font-size:11px">Gap Below Toolpath</div>
<div class="a" style="left:1805px;top:340px;width:51px;height:20px;background:#fff;border:1px solid #b8b8b8"></div>
<div class="t" style="left:1811px;top:344.59px;font-size:11px">0.1875</div>
<div class="t" style="left:1859px;top:344.59px;font-size:11px">inches</div>
<div class="t" style="left:1679px;top:367.79px;font-size:11px">Cut Depth :</div>
<div class="t" style="left:1781.7px;top:367.99px;font-size:11px">0.5625 inches</div>
<div class="a" style="left:1654px;top:396px;width:252px;height:72px;background:#fff;border-radius:5px"></div>
<div class="a" style="left:1664px;top:400px;width:5px;height:18px;background:linear-gradient(90deg,#8c7430,#e8dca0 50%,#7a6428);box-shadow:1px 1px 1px #bbb"></div>
<div class="t b" style="left:1676.4px;top:398.87px;font-size:11.5px">Tool:</div>
<div class="t" style="left:1709.6px;top:399.29px;font-size:11px">Ball Nose (1/8")</div>
<div class="a" style="left:1755px;top:416px;width:63px;height:18px;background:#efefef;border:1px solid #adadad"></div>
<div class="t" style="left:1755px;width:63px;text-align:center;top:419.29px;font-size:11px;">Select ...</div>
<div class="a" style="left:1836px;top:416px;width:63px;height:18px;background:#efefef;border:1px solid #adadad"></div>
<div class="t" style="left:1836px;width:63px;text-align:center;top:419.29px;font-size:11px;">Edit ...</div>
<div class="a" style="left:1664px;top:445px;width:13px;height:13px;background:#fff;border:1px solid #8f8f8f"></div>
<svg class="a" style="left:1664px;top:445px" width="13" height="13"><path d="M3 6.5 L5.5 9 L10 3.5" stroke="#222" stroke-width="1.6" fill="none"/></svg>
<div class="t" style="left:1679.5px;top:446.99px;font-size:11px">Vary Stepover</div>
<div class="a" style="left:1778px;top:445px;width:13px;height:13px;background:#fff;border:1px solid #8f8f8f"></div>
<svg class="a" style="left:1778px;top:445px" width="13" height="13"><path d="M3 6.5 L5.5 9 L10 3.5" stroke="#222" stroke-width="1.6" fill="none"/></svg>
<div class="t" style="left:1793.3px;top:446.99px;font-size:11px">Skip Flat Regions</div>
<div class="a" style="left:1654px;top:476px;width:252px;height:216px;background:#fff;border-radius:5px"></div>
<div class="a" style="left:1661px;top:481px;width:13px;height:13px;background:#fff;border:1px solid #8f8f8f"></div>
<svg class="a" style="left:1661px;top:481px" width="13" height="13"><path d="M3 6.5 L5.5 9 L10 3.5" stroke="#222" stroke-width="1.6" fill="none"/></svg>
<div class="t b" style="left:1677px;top:482.31px;font-size:11.8px;letter-spacing:0px">Use Larger Area Clearance Tool</div>
<div class="a" style="left:1669px;top:501px;width:5px;height:18px;background:linear-gradient(90deg,#8c7430,#e8dca0 50%,#7a6428);box-shadow:1px 1px 1px #bbb"></div>
<div class="t" style="left:1681.4px;top:504.89px;font-size:11px">End Mill (1/4")</div>
<div class="a" style="left:1758px;top:522px;width:63px;height:18px;background:#efefef;border:1px solid #adadad"></div>
<div class="t" style="left:1758px;width:63px;text-align:center;top:525.09px;font-size:11px;">Select ...</div>
<div class="a" style="left:1836px;top:522px;width:63px;height:18px;background:#efefef;border:1px solid #adadad"></div>
<div class="t" style="left:1836px;width:63px;text-align:center;top:525.09px;font-size:11px;">Edit ...</div>
<div class="a" style="left:1719px;top:556px;width:13px;height:13px;background:#fff;border:1px solid #8f8f8f"></div>
<svg class="a" style="left:1719px;top:556px" width="13" height="13"><path d="M3 6.5 L5.5 9 L10 3.5" stroke="#222" stroke-width="1.6" fill="none"/></svg>
<div class="t" style="left:1734.2px;top:557.69px;font-size:11px">Machine Flat Regions</div>
<div class="a" style="left:1719px;top:584px;width:13px;height:13px;background:#fff;border:1px solid #8f8f8f"></div>
<svg class="a" style="left:1719px;top:584px" width="13" height="13"><path d="M3 6.5 L5.5 9 L10 3.5" stroke="#222" stroke-width="1.6" fill="none"/></svg>
<div class="t" style="left:1734.2px;top:586.29px;font-size:11px">Ramp Plunge Moves</div>
<svg class="a" style="left:1688px;top:583px" width="28" height="44"><path d="M2.9 1.7 H14.8 M3 0 V3.5 M14.8 0 V3.5" stroke="#111" stroke-width="1"/><path d="M14.1 2 V39.4" stroke="#111" stroke-width="1" stroke-dasharray="1.6 1.4"/><rect x="1.3" y="6.9" width="3.7" height="13.5" fill="#b8a050" stroke="#8a7430" stroke-width="0.6"/><path d="M2.6 21.1 L14.1 29.9 L2.6 38.7" stroke="#e04848" stroke-width="1.2" fill="none"/><path d="M1 39.4 H25.9" stroke="#111" stroke-width="1.3"/><path d="M3 42 H27" stroke="#d8d8d8" stroke-width="1.5"/></svg>
<div class="t" style="left:1724.7px;top:610.99px;font-size:11px">Distance</div>
<div class="a" style="left:1776px;top:605px;width:41px;height:20px;background:#fff;border:1px solid #b8b8b8"></div>
<div class="t" style="left:1782.7px;top:609.89px;font-size:11px">1.0</div>
<div class="t" style="left:1822.6px;top:606.69px;font-size:11px">inches</div>
<div class="t b" style="left:1719.3px;top:645.87px;font-size:11.5px">Machining Allowance</div>
<svg class="a" style="left:1724px;top:667px" width="22" height="16"><path d="M1 12 Q4 12 6 8 Q9 3 12 8 Q14 12 17 12 V15 H1Z" fill="#f0b070"/><path d="M1 10 Q4 10 6 5.5 Q9 1 12 5.5 Q14 10 17 10" stroke="#a02040" stroke-width="1" fill="none"/><path d="M19 8h2M19 11h2" stroke="#333" stroke-width="1"/></svg>
<div class="a" style="left:1758px;top:665px;width:47px;height:19px;background:#fff;border:1px solid #b8b8b8"></div>
<div class="t" style="left:1763.5px;top:670.29px;font-size:11px">0.03</div>
<div class="t" style="left:1810.5px;top:671.29px;font-size:11px">inches</div>
<div class="a" style="left:1654px;top:700px;width:252px;height:34px;background:#fff;border-radius:5px"></div>
<div class="a" style="left:1673px;top:709px;width:13px;height:13px;background:#f4f4f4;border:1px solid #b4b4b4"></div>
<div class="t b" style="left:1689.3px;top:710.87px;font-size:11.5px">Create Sharp Corners</div>
<div class="a" style="left:1654px;top:742px;width:252px;height:61px;background:#fff;border-radius:5px"></div>
<div class="t" style="left:1667.6px;top:758.09px;font-size:11px">Boundary Offset</div>
<div class="a" style="left:1769px;top:752px;width:60px;height:23px;background:#fff;border:1px solid #b8b8b8"></div>
<div class="t" style="left:1774.6px;top:756.99px;font-size:11px">0.2</div>
<div class="t" style="left:1846.6px;top:756.29px;font-size:11px">inches</div>
<div class="a" style="left:1668px;top:782px;width:13px;height:13px;background:#f4f4f4;border:1px solid #b4b4b4"></div>
<div class="t" style="left:1683.2px;top:783.79px;font-size:11px">Use automatic boundary offset</div>
<div class="a" style="left:1654px;top:812px;width:252px;height:124px;background:#fff;border-radius:5px"></div>
<div class="t" style="left:1661.5px;top:819.09px;font-size:11px">Safe Z</div>
<div class="t" style="left:1739.7px;top:819.09px;font-size:11px">0.2 inches</div>
<div class="t" style="left:1661.5px;top:834.89px;font-size:11px">Home Position</div>
<div class="t" style="left:1739.7px;top:834.89px;font-size:11px">X:0.00 Y:0.00 Z:0.80</div>
<div class="a" style="left:1658px;top:852px;width:239px;height:1px;background:#a0a0a0"></div>
<div class="t" style="left:1661.5px;top:862.09px;font-size:11px">Rail Selection:</div>
<div class="t" style="left:1760.6px;top:862.09px;font-size:11px">Manual</div>
<div class="a" style="left:1833px;top:858px;width:66px;height:18px;background:#efefef;border:1px solid #adadad"></div>
<div class="t" style="left:1833px;width:66px;text-align:center;top:861.49px;font-size:11px;">Selector ...</div>
<div class="t" style="left:1661.5px;top:883.59px;font-size:11px;color:#a0a0a0">Profile Selection:</div>
<div class="t" style="left:1760.6px;top:883.59px;font-size:11px;color:#a0a0a0">Manual</div>
<div class="a" style="left:1832px;top:878px;width:68px;height:20px;background:#e6e6e6"></div>
<div class="t" style="left:1832px;width:68px;text-align:center;top:882.99px;font-size:11px;color:#a0a0a0">Selector ...</div>
<div class="a" style="left:1658px;top:903px;width:239px;height:1px;background:#a0a0a0"></div>
<div class="t" style="left:1661.5px;top:915.89px;font-size:11px">Name:</div>
<div class="a" style="left:1701px;top:909px;width:198px;height:20px;background:#fff;border:1px solid #b8b8b8"></div>
<div class="t" style="left:1706.3px;top:913.99px;font-size:11px">Swept Profile 1</div>
<div class="a" style="left:1654px;top:941px;width:73px;height:21px;background:#f0f0f0;border:1.5px solid #2a2a2a"></div>
<div class="t" style="left:1654px;width:73px;text-align:center;top:946.49px;font-size:11px;">Calculate</div>
<div class="a" style="left:1833px;top:941px;width:73px;height:21px;background:#efefef;border:1px solid #adadad"></div>
<div class="t" style="left:1833px;width:73px;text-align:center;top:946.49px;font-size:11px;">Close</div>
<svg class="a" style="left:1855px;top:60px" width="56" height="17"><rect x="1.6" y="1.6" width="15" height="13.6" fill="#fff" stroke="#111" stroke-width="1.3"/><rect x="2.3" y="2.3" width="4" height="12.2" fill="#d0d0d0"/><path d="M6.6 2V15" stroke="#111" stroke-width="1.2"/><path d="M14.3 4.8 L9.6 8.4 L14.3 12.2" stroke="#111" stroke-width="1.9" fill="none" stroke-linecap="round"/><text x="25.5" y="13.3" font-family="Liberation Sans" font-size="13.5" fill="#1a1a1a">?</text><path d="M48.8 2.8 H52.2 M48.8 2.8 V9.5 M52 2.8 V9.5 M46.5 10 H54.5 M50.5 10 V14" stroke="#111" stroke-width="1.2" fill="none"/><rect x="51" y="3" width="1.6" height="6.5" fill="#111"/></svg></div><!--/panel-->

<!-- STATUS -->
<div class="t" style="left:5px;top:1063px">Ready</div>
<svg class="a" style="left:1902px;top:1064px" width="14" height="12"><g fill="#a8a8a8"><rect x="9" y="2" width="1" height="1"/><rect x="7" y="4" width="1" height="1"/><rect x="9" y="4" width="1" height="1"/><rect x="5" y="6" width="1" height="1"/><rect x="7" y="6" width="1" height="1"/><rect x="9" y="6" width="1" height="1"/><rect x="3" y="8" width="1" height="1"/><rect x="5" y="8" width="1" height="1"/><rect x="7" y="8" width="1" height="1"/><rect x="9" y="8" width="1" height="1"/></g></svg>

</body></html>
